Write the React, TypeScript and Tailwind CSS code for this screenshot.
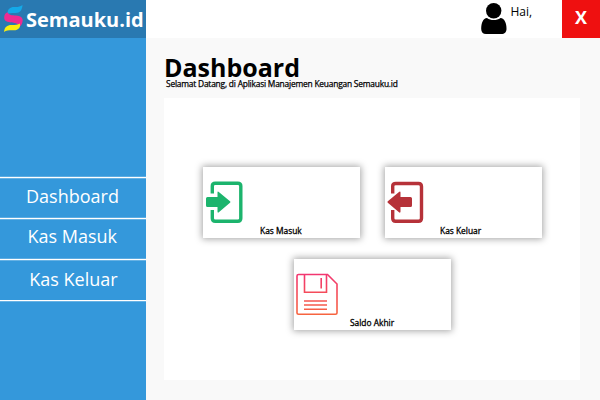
import React from "react";

function Logo() {
  return (
    <svg className="h-[28px] w-[20px] shrink-0" viewBox="0 0 20 28">
      <path d="M4.500 9C4.500 4 7 2 11 2C15 2.200 17 1.700 19.500 0C19.200 5 17 8 12.500 8C8 8 6 8 4.500 9Z" fill="#14a9e8" />
      <path d="M4.500 7.300C6 10.500 9 10.300 13 10.500C17.500 10.800 19.800 12.500 19.700 15.500C19.500 18 18.500 20.500 16.800 21.500C15 18.200 11 17.700 7 17.300C3 16.800 1 15.500 1.200 12C1.500 9.500 2.500 8 4.500 7.300Z" fill="#ee2b91" />
      <path d="M1 27C1.500 22 4 20 8.500 20C12.500 20 15 19.500 16.800 18.500C18 22 15.500 25.300 11 25.300C6.500 25.200 3.500 25.300 1 27Z" fill="#faed10" />
    </svg>
  );
}

function UserIcon() {
  return (
    <svg className="h-[31px] w-[26px]" viewBox="0 0 26 31">
      <circle cx="12.700" cy="7.700" r="7.700" />
      <path d="M6 15C8 16.600 10 17 12.700 17S17.500 16.600 19.500 15C23.500 15.500 25.500 20 25.500 26C25.500 29 23.500 31 20.500 31H5C2 31 .2 29 .2 26C.2 20 2 15.500 6 15Z" />
    </svg>
  );
}

function InIcon() {
  return (
    <svg className="h-[42px] w-[38px]" viewBox="0 0 38 42" fill="none">
      <path d="M6.300 12.500V5Q6.300 2.200 9.300 2.200H31.800Q34.800 2.200 34.800 5V37.200Q34.800 40.200 31.800 40.200H9.300Q6.300 40.200 6.300 37.200V29" stroke="#1cb46d" strokeWidth="3.400" />
      <path d="M1.500 16H11.500V11.500Q11.500 10 12.800 11L24 20.300Q25 21 24 21.700L12.800 31.300Q11.500 32.300 11.500 30.500V26H1.500Q0 26 0 24.500V17.500Q0 16 1.500 16Z" fill="#1cb46d" />
    </svg>
  );
}

function OutIcon() {
  return (
    <svg className="-ml-px h-[42px] w-[38px]" viewBox="0 0 38 42" fill="none">
      <path d="M5.700 12.500V5Q5.700 2.500 8.700 2.500H31.500Q34.500 2.500 34.500 5.500V37.200Q34.500 40.200 31.500 40.200H8.700Q5.700 40.200 5.700 37.200V29" stroke="#b63239" strokeWidth="3.400" />
      <path d="M.8 20.300L12 11Q13.500 10 13.500 11.500V16H23.500Q25 16 25 17.500V24.500Q25 26 23.500 26H13.500V30.500Q13.500 32.300 12 31.300L.8 21.700Q0 21 .8 20.300Z" fill="#b63239" />
    </svg>
  );
}

function DiskIcon() {
  return (
    <svg className="-ml-px h-[42px] w-[42px]" viewBox="0 0 42 42" fill="none">
      <defs>
        <linearGradient id="disk" gradientUnits="userSpaceOnUse" x1="0" y1="0" x2="0" y2="42">
          <stop offset="0" stopColor="#f23572" />
          <stop offset="1" stopColor="#f7653f" />
        </linearGradient>
      </defs>
      <g stroke="url(#disk)" strokeWidth="1.600">
        <path d="M2.500 1.500H31.500L41 11V40Q41 41.200 39.500 41.200H2.500Q1 41.200 1 40V3Q1 1.500 2.500 1.500Z" />
        <path d="M8.500 1.500V19.200H30.500V1.500M25.200 5V15.500M8 28H31M8 32H31M8 36.200H31" />
      </g>
    </svg>
  );
}

function Card({ label, icon, pad }: { label: string; icon: React.ReactNode; pad: string }) {
  return (
    <section className="flex h-[71px] w-[157px] flex-col bg-white pt-[14px] shadow-[0_0_7px_1px_rgba(0,0,0,0.36)]">
      <div className="h-[42px] pl-[3px]">{icon}</div>
      <p className={`${pad} whitespace-nowrap text-[8.400px] leading-[15px] [-webkit-text-stroke:0.300px_black]`}>{label}</p>
    </section>
  );
}

export default function App() {
  return (
    <div className="flex h-[400px] w-[600px] overflow-hidden bg-[#f9f9f9] font-['Open_Sans',sans-serif] text-black">
      <aside className="flex w-[146px] shrink-0 flex-col bg-[#3498db] text-white">
        <div className="flex h-[38px] items-center gap-[3px] bg-[#2979b1] pl-[3px]">
          <Logo />
          <span className="pt-px text-[20px] font-bold leading-[38px]">Semauku.id</span>
        </div>
        <nav className="mt-[139px] flex flex-col border-b border-white text-[18px] shadow-[0_1px_0_rgba(255,255,255,0.25)]">
          <a className="h-[41px] border-t border-white pl-[26px] leading-[37px] shadow-[0_-1px_0_rgba(255,255,255,0.2),inset_0_1px_0_rgba(255,255,255,0.25)]">Dashboard</a>
          <a className="h-[41px] border-t border-white pl-[27.500px] leading-[35px] shadow-[0_-1px_0_rgba(255,255,255,0.2),inset_0_1px_0_rgba(255,255,255,0.25)]">Kas Masuk</a>
          <a className="h-[41px] border-t border-white pl-[29.300px] leading-[39px] shadow-[0_-1px_0_rgba(255,255,255,0.2),inset_0_1px_0_rgba(255,255,255,0.25)]">Kas Keluar</a>
        </nav>
      </aside>
      <div className="flex flex-1 flex-col">
        <header className="flex h-[38px] justify-end bg-white">
          <div className="pt-[3px]"><UserIcon /></div>
          <span className="w-[55px] pl-[3.500px] pt-[4px] text-[12px] leading-[16px]">Hai,</span>
          <button className="w-[38px] bg-[#ef1010] pb-[4px] text-[18px] font-bold leading-[34px] text-white">X</button>
        </header>
        <main className="flex flex-1 flex-col pl-[18px] pr-[20px] pt-[12px]">
          <h1 className="h-[29px] text-[25px] font-bold leading-[34px]">Dashboard</h1>
          <p className="h-[19px] whitespace-nowrap pl-[2px] text-[8.400px] leading-[10px] tracking-[-0.200px] [-webkit-text-stroke:0.250px_black]">Selamat Datang, di Aplikasi Manajemen Keuangan Semauku.id</p>
          <div className="flex h-[282px] flex-col items-center gap-[21px] bg-white pt-[69px]">
            <div className="flex gap-[25px]">
              <Card label="Kas Masuk" icon={<InIcon />} pad="pl-[57.500px]" />
              <Card label="Kas Keluar" icon={<OutIcon />} pad="pl-[55.500px]" />
            </div>
            <Card label="Saldo Akhir" icon={<DiskIcon />} pad="pl-[56.500px]" />
          </div>
        </main>
      </div>
    </div>
  );
}
